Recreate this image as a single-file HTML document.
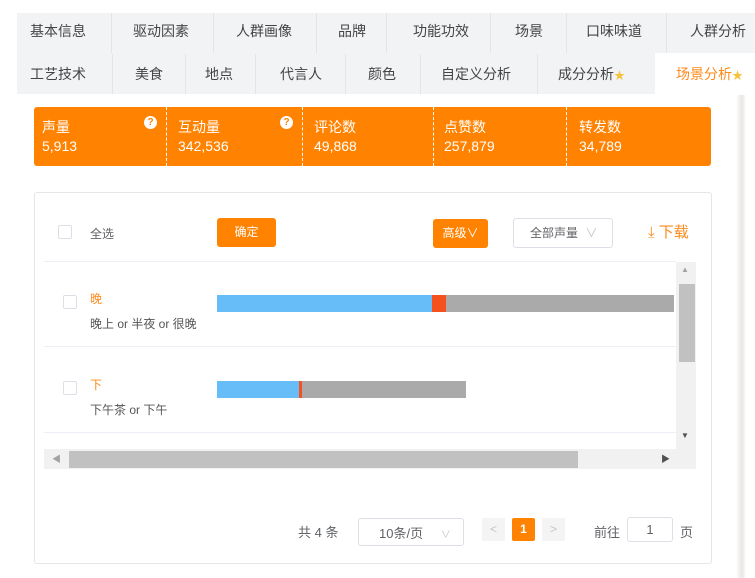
<!DOCTYPE html>
<html><head><meta charset="utf-8"><style>
*{margin:0;padding:0;box-sizing:border-box}
body{width:755px;height:578px;background:#fff;font-family:"Liberation Sans","Noto Sans CJK SC",sans-serif;position:relative;overflow:hidden;color:#333}
.a{position:absolute;white-space:nowrap}
.tabs{position:absolute;left:17px;top:13px;width:738px;height:81px;background:#f2f3f5}
.t{position:absolute;font-size:14px;color:#444}
.d{position:absolute;width:1px;background:#e4e4e4}
.star{color:#f7c23a;font-size:11px}
.card{position:absolute;left:34px;top:107px;width:677px;height:59px;background:#ff8200;border-radius:3px;color:#fff}
.card .c{position:absolute;top:11px;font-size:14px;line-height:19px}
.dash{position:absolute;top:0;height:59px;border-left:1px dashed #fff}
.q{position:absolute;top:9px;width:13px;height:13px;border-radius:50%;background:#fff;color:#ff8200;font-size:10px;text-align:center;line-height:13px;font-weight:bold}
.box{position:absolute;left:34px;top:192px;width:678px;height:372px;border:1px solid #e6e6e6;border-radius:3px}
.cb{position:absolute;width:14px;height:14px;border:1px solid #dcdfe6;border-radius:2px;background:#fff}
.btn{position:absolute;background:#ff8200;color:#fff;font-size:12px;text-align:center;border-radius:3px}
</style></head><body>
<div class="tabs"></div>
<div class="a" style="left:655px;top:53px;width:100px;height:41px;background:#fff"></div>
<div class="d" style="left:111px;top:13px;height:40px"></div>
<div class="d" style="left:213px;top:13px;height:40px"></div>
<div class="d" style="left:316px;top:13px;height:40px"></div>
<div class="d" style="left:386px;top:13px;height:40px"></div>
<div class="d" style="left:490px;top:13px;height:40px"></div>
<div class="d" style="left:566px;top:13px;height:40px"></div>
<div class="d" style="left:666px;top:13px;height:40px"></div>
<div class="d" style="left:112px;top:54px;height:40px"></div>
<div class="d" style="left:185px;top:54px;height:40px"></div>
<div class="d" style="left:255px;top:54px;height:40px"></div>
<div class="d" style="left:345px;top:54px;height:40px"></div>
<div class="d" style="left:420px;top:54px;height:40px"></div>
<div class="d" style="left:537px;top:54px;height:40px"></div>
<div class="t" style="left:30px;top:21px">基本信息</div>
<div class="t" style="left:133px;top:21px">驱动因素</div>
<div class="t" style="left:236px;top:21px">人群画像</div>
<div class="t" style="left:338px;top:21px">品牌</div>
<div class="t" style="left:413px;top:21px">功能功效</div>
<div class="t" style="left:515px;top:21px">场景</div>
<div class="t" style="left:586px;top:21px">口味味道</div>
<div class="t" style="left:690px;top:21px">人群分析</div>
<div class="t" style="left:30px;top:64px">工艺技术</div>
<div class="t" style="left:135px;top:64px">美食</div>
<div class="t" style="left:205px;top:64px">地点</div>
<div class="t" style="left:280px;top:64px">代言人</div>
<div class="t" style="left:368px;top:64px">颜色</div>
<div class="t" style="left:441px;top:64px">自定义分析</div>
<div class="t" style="left:558px;top:64px">成分分析<span class="star">★</span></div>
<div class="t" style="left:676px;top:64px;color:#ff8a1a">场景分析<span class="star">★</span></div>
<div class="a" style="left:736px;top:95px;width:10px;height:483px;background:linear-gradient(90deg,#fff,#e8e5e3 60%,#fff)"></div>

<div class="card">
<div class="c" style="left:8px">声量<br>5,913</div>
<div class="q" style="left:110px">?</div>
<div class="dash" style="left:132px"></div>
<div class="c" style="left:144px">互动量<br>342,536</div>
<div class="q" style="left:246px">?</div>
<div class="dash" style="left:268px"></div>
<div class="c" style="left:280px">评论数<br>49,868</div>
<div class="dash" style="left:399px"></div>
<div class="c" style="left:410px">点赞数<br>257,879</div>
<div class="dash" style="left:532px"></div>
<div class="c" style="left:545px">转发数<br>34,789</div>
</div>

<div class="box"></div>
<div class="cb" style="left:58px;top:225px"></div>
<div class="a" style="left:90px;top:225px;font-size:12px;color:#606266">全选</div>
<div class="btn" style="left:217px;top:218px;width:59px;height:29px;line-height:29px">确定</div>
<div class="btn" style="left:433px;top:219px;width:55px;height:29px;line-height:29px">高级∨</div>
<div class="a" style="left:513px;top:218px;width:100px;height:30px;border:1px solid #dcdfe6;border-radius:3px;font-size:12px;color:#606266;line-height:28px;padding-left:16px">全部声量 <span style="color:#c0c4cc;margin-left:4px">∨</span></div>
<div class="a" style="left:648px;top:221px;font-size:15px;color:#ff8a1a">⤓ 下载</div>
<div class="a" style="left:44px;top:261px;width:632px;height:1px;background:#ebeef5"></div>
<div class="a" style="left:44px;top:346px;width:632px;height:1px;background:#ebeef5"></div>
<div class="a" style="left:44px;top:432px;width:632px;height:1px;background:#ebeef5"></div>

<div class="cb" style="left:63px;top:295px"></div>
<div class="a" style="left:90px;top:290px;font-size:12px;color:#ff8a1a">晚</div>
<div class="a" style="left:90px;top:315px;font-size:12px;color:#555">晚上 or 半夜 or 很晚</div>
<div class="a" style="left:217px;top:295px;width:215px;height:17px;background:#66bdf8"></div>
<div class="a" style="left:432px;top:295px;width:14px;height:17px;background:#f4511e"></div>
<div class="a" style="left:446px;top:295px;width:228px;height:17px;background:#aaa"></div>

<div class="cb" style="left:63px;top:381px"></div>
<div class="a" style="left:90px;top:376px;font-size:12px;color:#ff8a1a">下</div>
<div class="a" style="left:90px;top:401px;font-size:12px;color:#555">下午茶 or 下午</div>
<div class="a" style="left:217px;top:381px;width:82px;height:17px;background:#66bdf8"></div>
<div class="a" style="left:299px;top:381px;width:3px;height:17px;background:#f4511e"></div>
<div class="a" style="left:302px;top:381px;width:164px;height:17px;background:#aaa"></div>

<div class="a" style="left:676px;top:262px;width:20px;height:188px;background:#f1f1f1"></div>
<div class="a" style="left:679px;top:284px;width:16px;height:78px;background:#c1c1c1"></div>
<div class="a" style="left:681px;top:265px;font-size:8px;color:#a3a3a3">▲</div>
<div class="a" style="left:681px;top:431px;font-size:8px;color:#505050">▼</div>
<div class="a" style="left:44px;top:449px;width:652px;height:20px;background:#f1f1f1"></div>
<div class="a" style="left:69px;top:451px;width:509px;height:17px;background:#c1c1c1"></div>
<div class="a" style="left:52px;top:452px;font-size:9px;color:#a3a3a3">◀</div>
<div class="a" style="left:661px;top:452px;font-size:9px;color:#505050">▶</div>

<div class="a" style="left:298px;top:522px;font-size:13px;color:#606266">共 4 条</div>
<div class="a" style="left:358px;top:518px;width:106px;height:28px;border:1px solid #dcdfe6;border-radius:3px;font-size:13px;color:#606266;line-height:30px;padding-left:20px">10条/页 <span style="color:#c0c4cc;font-size:10px;margin-left:14px">∨</span></div>
<div class="a" style="left:482px;top:518px;width:23px;height:23px;background:#f4f4f5;color:#c0c4cc;font-size:12px;text-align:center;line-height:23px">&lt;</div>
<div class="a" style="left:512px;top:518px;width:23px;height:23px;background:#ff8200;color:#fff;font-size:12px;font-weight:bold;text-align:center;line-height:23px;border-radius:2px">1</div>
<div class="a" style="left:542px;top:518px;width:23px;height:23px;background:#f4f4f5;color:#c0c4cc;font-size:12px;text-align:center;line-height:23px">&gt;</div>
<div class="a" style="left:594px;top:522px;font-size:13px;color:#606266">前往</div>
<div class="a" style="left:627px;top:517px;width:46px;height:25px;border:1px solid #dcdfe6;border-radius:3px;font-size:13px;text-align:center;line-height:23px;color:#606266">1</div>
<div class="a" style="left:680px;top:522px;font-size:13px;color:#606266">页</div>
</body></html>
